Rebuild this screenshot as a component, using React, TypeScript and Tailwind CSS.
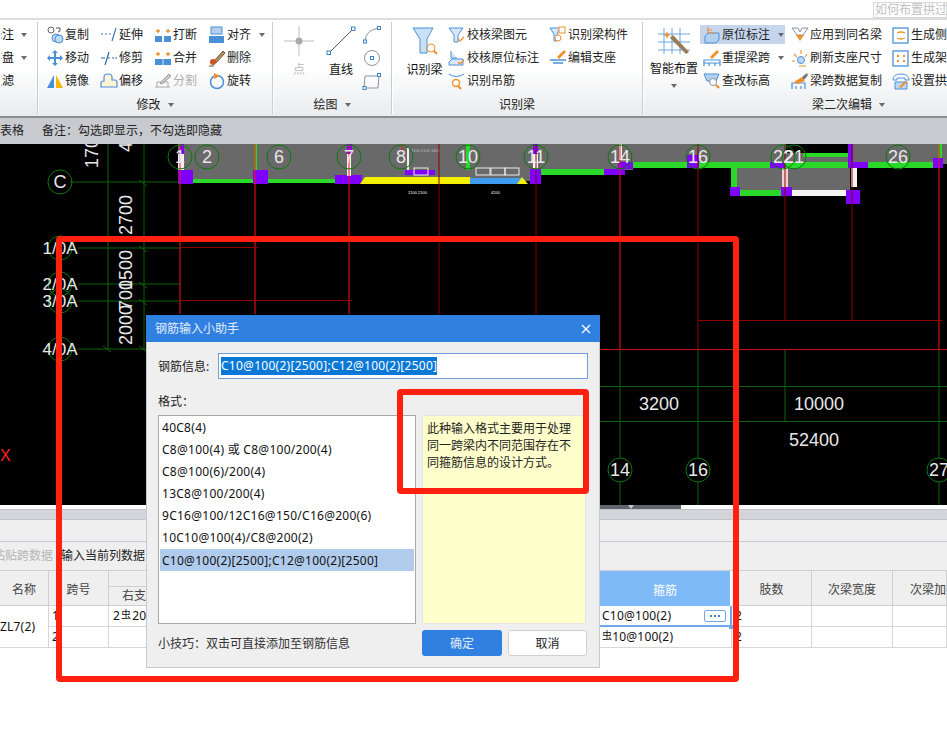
import type { ReactNode } from 'react';

const FONT = "font-['Noto_Sans','Noto_Sans_CJK_SC',sans-serif]";
const BLUE = '#4a90d9';
const ORANGE = '#f0902a';
const GREY = '#8a949e';

// 18x18 ribbon icons, drawn roughly like the originals
const ICONS: Record<string, ReactNode> = {
  copy: <><circle cx="5" cy="4" r="3" fill="#fff" stroke="#666" /><circle cx="10" cy="12" r="4" fill="#bcd8f4" stroke={BLUE} /><circle cx="13" cy="13" r="4" fill="#bcd8f4" stroke={BLUE} /><path d="M10 2h4v3M12 6l2-1" fill="none" stroke="#555" /></>,
  move: <path d="M9 1l3 3h-2v4h4V6l3 3-3 3v-2h-4v4h2l-3 3-3-3h2v-4H4v2L1 9l3-3v2h4V4H6z" fill={BLUE} />,
  mirror: <><path d="M8 3v13H1z" fill={BLUE} /><path d="M10 3v13h7z" fill="#f8b500" /></>,
  extend: <path d="M1 8h2M5 8h2M9 8h2M16 2l-4 13" fill="none" stroke="#3d78b8" strokeWidth="1.2" />,
  trim: <path d="M1 9h4M8 9h2M12 9h2M15 9h2M9 3l-4 13" fill="none" stroke="#2b6aa8" strokeWidth="1.2" />,
  offset: <path d="M1 15v-4q0-2 3-2V5q0-3 4-3t4 3v3h3q2 0 2 3v4z" fill="#fff3d8" stroke={BLUE} strokeWidth="1.2" />,
  breakIcon: <><rect x="1" y="10" width="7" height="6" fill={BLUE} /><rect x="10" y="10" width="7" height="6" fill={BLUE} /><path d="M2 5h4M4 3v4M12 5h4M14 3v4" stroke={ORANGE} strokeWidth="1.3" /></>,
  merge: <><rect x="1" y="10" width="16" height="6" fill={BLUE} /><path d="M9 10v6" stroke="#cfe2f6" /><path d="M2 5h4M4 3v4M12 5h4M14 3v4" stroke={ORANGE} strokeWidth="1.3" /></>,
  split: <><path d="M1 15h15M3 15v-5h11v5" fill="none" stroke="#aaa" /><path d="M6 11l9-9 2 2-9 8z" fill="#ccc" stroke="#999" /></>,
  align: <><rect x="3" y="1" width="11" height="7" fill="#b4d0f0" stroke={BLUE} /><rect x="1" y="10" width="15" height="7" fill={BLUE} /></>,
  erase: <><path d="M6 12L15 2l2 2-9 10z" fill="#b89060" stroke="#6b5a40" /><circle cx="5" cy="13" r="3" fill="#d2521c" /><path d="M1 17h5" stroke="#555" /></>,
  rotate: <><circle cx="9" cy="10" r="6.5" fill="none" stroke={BLUE} strokeWidth="1.5" /><path d="M6 1l6 3-6 3z" fill={ORANGE} /></>,
  check1: <><path d="M1 2h14l-5 7v7H6V9z" fill="#d8e8f8" stroke={BLUE} /><path d="M10 13l2 2 4-4" fill="none" stroke={ORANGE} strokeWidth="1.3" /></>,
  check2: <><path d="M3 2v7h6M1 13l3-3h11v6H1z" fill="#d8e8f8" stroke={BLUE} /><path d="M10 13l2 2 4-4" fill="none" stroke={ORANGE} strokeWidth="1.3" /></>,
  hanger: <><path d="M1 2q7 5 15 0" fill="none" stroke={BLUE} /><circle cx="8" cy="11" r="3.5" fill="#fff" stroke={ORANGE} strokeWidth="1.4" /><path d="M10 14l3 3" stroke={ORANGE} strokeWidth="2" /></>,
  member: <><path d="M1 2h10l-3 6v7H5V8z" fill="#d8e8f8" stroke={BLUE} /><rect x="10" y="1" width="6" height="6" fill="#fff" stroke={ORANGE} /><circle cx="9" cy="12" r="3" fill="#fff" stroke={ORANGE} /></>,
  support: <><path d="M8 8l7-7 2 2-7 7z" fill={ORANGE} /><path d="M1 11h16M4 14h10" stroke={BLUE} strokeWidth="1.3" /></>,
  inplace: <><path d="M2 10l3-3h11v7l-3 3H2z" fill="#b4d0f0" stroke={BLUE} /><path d="M5 1v6M5 4h4M5 7h7" stroke={ORANGE} strokeWidth="1.2" /></>,
  reget: <><path d="M7 8l7-7 2 2-7 7z" fill={ORANGE} /><path d="M1 17v-6h16v6M1 14h16M6 14v3M12 14v3" fill="none" stroke={BLUE} strokeWidth="1.2" /></>,
  level: <><path d="M1 2h15l-3 7H4z" fill="#b4d0f0" stroke={BLUE} /><circle cx="10" cy="10" r="3.5" fill="#fff" stroke={GREY} /><path d="M13 13l3 3" stroke={ORANGE} strokeWidth="2.4" /></>,
  apply: <><path d="M1 2h6l2 4 2-4h6l-5 7H6z" fill="#fff" stroke={GREY} /><path d="M5 9h8l-4 6z" fill={ORANGE} /></>,
  refresh: <><circle cx="10" cy="11" r="3.5" fill="#bcd8f4" stroke={BLUE} /><path d="M10 1v4M3 5l3 3M1 12h3M16 5l-2 3M8 17h7" stroke={ORANGE} strokeWidth="1.1" /></>,
  brush: <><path d="M1 17v-6h13v6M5 14v3M10 14v3" fill="none" stroke={BLUE} strokeWidth="1.2" /><path d="M3 10l8-5 3 4-8 3z" fill={ORANGE} /><path d="M11 5l5-4 1 2-4 5z" fill="#777" /></>,
  side: <><rect x="1" y="2" width="15" height="15" fill="#fff" stroke={BLUE} strokeWidth="1.3" /><path d="M5 7q4-2 8 0M5 12q4 2 8 0" fill="none" stroke={ORANGE} strokeWidth="1.3" /></>,
  frame: <><rect x="1" y="2" width="15" height="15" fill="#fff" stroke={BLUE} strokeWidth="1.3" /><path d="M5 6h2v2H5zM11 6h2v2h-2zM5 11h2v2H5zM11 11h2v2h-2z" fill={ORANGE} /></>,
  arch: <><path d="M1 8q0-6 8-6t8 6h-4V6H5v2z" fill="#fff" stroke={BLUE} /><path d="M3 10h12v7H3z" fill="#bcd8f4" stroke={BLUE} /><path d="M7 15l6-6 2 1-6 6z" fill={ORANGE} /></>,
};

function Icon({ name, size = 18 }: { name: string; size?: number }) {
  return (
    <svg width={size} height={size} viewBox="0 0 18 18" className="shrink-0">
      {ICONS[name]}
    </svg>
  );
}

function Caret({ className = '' }: { className?: string }) {
  return <span className={`inline-block w-0 h-0 border-x-[3.5px] border-x-transparent border-t-[4px] border-t-[#6b6b6b] ${className}`} />;
}

function RibbonItem({ icon, label, caret, disabled }: { icon: string; label: string; caret?: boolean; disabled?: boolean }) {
  return (
    <div className="flex items-center h-[23px] whitespace-nowrap gap-[1px]">
      <Icon name={icon} />
      <span className={disabled ? 'text-[#b0b0b0]' : 'text-[#222]'}>{label}</span>
      {caret && <Caret className="ml-[7px]" />}
    </div>
  );
}

function RibbonGroup({ width, label, caret, children }: { width: number; label?: string; caret?: boolean; children: ReactNode }) {
  return (
    <div className="flex flex-col shrink-0 border-r border-r-[#c9cbce] shadow-[1px_0_0_#fff] my-[2px]" style={{ width }}>
      <div className="flex h-[69px] mt-[1px] ">{children}</div>
      <div className="h-[23px] pt-[4px] flex items-center justify-center gap-[7px] text-[#222]">
        {label}
        {caret && <Caret />}
      </div>
    </div>
  );
}

function Ribbon() {
  return (
    <div className="flex h-[98px] pl-px bg-gradient-to-b from-white from-50% to-[#e9ebed] border-b-2 border-b-[#8b8d90]">
      <RibbonGroup width={37}>
        <div className="flex flex-col w-full overflow-hidden">
          {['标注', '存盘', '过滤'].map((t, i) => (
            <div key={t} className="flex items-center h-[23px] -ml-[11px] whitespace-nowrap">
              {t}
              {i < 2 && <Caret className="ml-[7px]" />}
            </div>
          ))}
        </div>
      </RibbonGroup>

      <RibbonGroup width={235} label="修改" caret>
        <div className="flex pl-[8px]">
          <div className="w-[54px]">
            <RibbonItem icon="copy" label="复制" />
            <RibbonItem icon="move" label="移动" />
            <RibbonItem icon="mirror" label="镜像" />
          </div>
          <div className="w-[54px]">
            <RibbonItem icon="extend" label="延伸" />
            <RibbonItem icon="trim" label="修剪" />
            <RibbonItem icon="offset" label="偏移" />
          </div>
          <div className="w-[54px]">
            <RibbonItem icon="breakIcon" label="打断" />
            <RibbonItem icon="merge" label="合并" />
            <RibbonItem icon="split" label="分割" disabled />
          </div>
          <div>
            <RibbonItem icon="align" label="对齐" caret />
            <RibbonItem icon="erase" label="删除" />
            <RibbonItem icon="rotate" label="旋转" />
          </div>
        </div>
      </RibbonGroup>

      <RibbonGroup width={119} label="绘图" caret>
        <div className="flex pl-[11px]">
          <div className="w-[30px] flex flex-col items-center">
            <svg width="30" height="30" viewBox="0 0 30 30" className="mt-[3px]">
              <path d="M0 15h30M15 0v30" stroke="#bdbdbd" />
              <circle cx="15" cy="15" r="3.5" fill="#aaa" />
            </svg>
            <span className="mt-[5px] text-[#bdbdbd]">点</span>
          </div>
          <div className="w-[30px] ml-[12px] flex flex-col items-center">
            <svg width="30" height="30" viewBox="0 0 30 30" className="mt-[3px]">
              <path d="M3 27L27 3" stroke="#555" />
              <rect x="1" y="25" width="3.5" height="3.5" fill="#fff" stroke="#3b82c4" />
              <rect x="25.500" y="1" width="3.500" height="3.500" fill="#fff" stroke="#3b82c4" />
            </svg>
            <span className="mt-[5px]">直线</span>
          </div>
          <div className="ml-[6px] flex flex-col gap-[3px] pt-[2px]">
            <svg width="20" height="20" viewBox="0 0 20 20"><path d="M3 17Q3 5 17 3" fill="none" stroke={GREY} /><rect x="1.500" y="15" width="3" height="3" fill="#fff" stroke="#3b82c4" /><rect x="15.500" y="1.500" width="3" height="3" fill="#fff" stroke="#3b82c4" /></svg>
            <svg width="20" height="20" viewBox="0 0 20 20"><circle cx="10" cy="10" r="7.500" fill="none" stroke={GREY} /><rect x="8.500" y="8.500" width="3" height="3" fill="#fff" stroke="#3b82c4" /></svg>
            <svg width="20" height="20" viewBox="0 0 20 20"><path d="M3 5h14l-1 12H2z" fill="none" stroke={GREY} /><rect x="15.500" y="2.500" width="3" height="3" fill="#fff" stroke="#3b82c4" /><rect x="1" y="15.500" width="3" height="3" fill="#fff" stroke="#3b82c4" /></svg>
          </div>
        </div>
      </RibbonGroup>

      <RibbonGroup width={251} label="识别梁">
        <div className="flex pl-[11px]">
          <div className="w-[45px] -ml-[1px] mr-[1px] flex flex-col items-center">
            <svg width="30" height="30" viewBox="0 0 30 30" className="mt-[3px]">
              <path d="M3 2h20l-6 11v14h-7V13z" fill="#c9e0f6" stroke={BLUE} />
              <circle cx="21" cy="22" r="4" fill="#fff" stroke={ORANGE} />
              <path d="M24 25l3 3" stroke={ORANGE} strokeWidth="2" />
            </svg>
            <span className="mt-[5px]">识别梁</span>
          </div>
          <div className="w-[101px]">
            <RibbonItem icon="check1" label="校核梁图元" />
            <RibbonItem icon="check2" label="校核原位标注" />
            <RibbonItem icon="hanger" label="识别吊筋" />
          </div>
          <div>
            <RibbonItem icon="member" label="识别梁构件" />
            <RibbonItem icon="support" label="编辑支座" />
          </div>
        </div>
      </RibbonGroup>

      <RibbonGroup width={412} label="梁二次编辑" caret>
        <div className="flex pl-[6px]">
          <div className="w-[50px] flex flex-col items-center">
            <svg width="32" height="32" viewBox="0 0 32 32" className="mt-[3px]">
              <path d="M6 2v26M14 2v26M22 2v26M0 8h32M0 16h32M0 24h32" stroke="#6fa6dc" />
              <path d="M12 12l16 16 3-2L15 9z" fill="#9a7b55" />
              <path d="M9 5l1 3 3 1-3 1-1 3-1-3-3-1 3-1z" fill={ORANGE} />
            </svg>
            <span className="mt-[2px] whitespace-nowrap">智能布置</span>
            <Caret className="mt-[6px]" />
          </div>
          <div className="w-[88px] -mr-[1px] ml-[1px]">
            <div className="bg-[#c5d5ec] h-[19px] mt-[2px] mb-[2px] flex items-center pl-[3px] w-[85px]">
              <RibbonItem icon="inplace" label="原位标注" caret />
            </div>
            <div className="pl-[3px]">
              <RibbonItem icon="reget" label="重提梁跨" caret />
              <RibbonItem icon="level" label="查改标高" />
            </div>
          </div>
          <div className="w-[105px] pl-[4px]">
            <RibbonItem icon="apply" label="应用到同名梁" />
            <RibbonItem icon="refresh" label="刷新支座尺寸" />
            <RibbonItem icon="brush" label="梁跨数据复制" />
          </div>
          <div>
            <RibbonItem icon="side" label="生成侧面筋" />
            <RibbonItem icon="frame" label="生成架立筋" />
            <RibbonItem icon="arch" label="设置拱梁" />
          </div>
        </div>
      </RibbonGroup>
    </div>
  );
}

const TOP_AXES: [string, number][] = [['1', 180], ['2', 207], ['6', 279], ['7', 349], ['8', 401], ['10', 468], ['11', 536], ['14', 620], ['16', 698], ['22', 783], ['21', 794], ['26', 898]];
const PURPLE: [number, number, number, number][] = [[178, 170, 15, 14], [253, 170, 15, 14], [335, 175, 27, 9], [347, 144, 5, 10], [180, 144, 4, 10], [530, 169, 11, 15], [604, 169, 21, 6], [618, 162, 15, 7], [687, 155, 12, 13], [770, 162, 15, 6], [852, 162, 16, 6], [848, 144, 5, 24], [933, 158, 10, 10], [730, 187, 10, 9], [781, 187, 11, 9], [846, 190, 14, 14], [405, 170, 30, 5], [533, 144, 5, 10]];
const GREENS: [number, number, number, number][] = [[193, 179, 60, 4], [268, 179, 67, 4], [541, 169, 63, 6], [633, 162, 137, 6], [785, 162, 67, 6], [868, 162, 65, 6], [803, 153, 47, 4], [731, 168, 6, 19], [740, 190, 41, 6], [254, 144, 3, 26], [938, 144, 4, 14], [466, 144, 4, 26]];
const COLUMNS: [number, number, number, number, string][] = [[782, 168, 6, 19, '#f4d0d0'], [851, 168, 6, 19, '#f4f4f4'], [178, 154, 6, 16, '#f4f4f4'], [347, 154, 4, 22, '#f4f4f4'], [407, 148, 2, 22, '#eeeeee'], [533, 154, 5, 15, '#f4f4f4'], [619, 144, 3, 16, '#f4f4f4']];

function Canvas() {
  const vertical = (x: number, y: number, t: string) => (
    <text x={x} y={y} transform={`rotate(-90 ${x} ${y})`} fontSize="18" fill="#e8e8e8">{t}</text>
  );
  const bubble = (x: number, y: number, t: string, key: string) => (
    <g key={key}>
      <circle cx={x} cy={y} r="12" fill="none" stroke="#0a7a0a" />
      <text x={x} y={y + 6} textAnchor="middle" fontSize="18" fill="#e8e8e8">{t}</text>
    </g>
  );
  return (
    <svg width="947" height="361" viewBox="0 144 947 361" className="block bg-black font-['Liberation_Sans',sans-serif]">
      <rect x="178" y="144" width="357" height="37" fill="#696969" />
      <rect x="535" y="144" width="98" height="26" fill="#696969" />
      <rect x="633" y="144" width="153" height="19" fill="#696969" />
      <rect x="786" y="153" width="161" height="10" fill="#696969" />
      <rect x="852" y="144" width="95" height="20" fill="#696969" />
      <rect x="733" y="168" width="117" height="24" fill="#696969" />
      {GREENS.map(([x, y, w, h], i) => <rect key={i} x={x} y={y} width={w} height={h} fill="#29d829" />)}
      {PURPLE.map(([x, y, w, h], i) => <rect key={i} x={x} y={y} width={w} height={h} fill="#8000ff" />)}
      <rect x="792" y="190" width="54" height="6" fill="#f4f4f4" />
      <path d="M360 184l5-7h105l5 7z" fill="#f4f000" />
      <path d="M470 178h52l5 6h-57z" fill="#3f9cf0" />
      <path d="M517 184l5-7 6 7z" fill="#f4f000" />
      {COLUMNS.map(([x, y, w, h, c], i) => <rect key={i} x={x} y={y} width={w} height={h} fill={c} />)}
      <rect x="414" y="168" width="14" height="7" fill="none" stroke="#eee" />
      {[476, 491, 505].map((x) => <rect key={x} x={x} y="168" width="14" height="7" fill="none" stroke="#eee" />)}
      <text x="408" y="194" fontSize="4" fill="#fff">2100 2100</text>
      <text x="491" y="194" fontSize="4" fill="#fff">4200</text>
      <text x="411" y="152" fontSize="4" fill="#bbb">2100 2100 1800</text>

      <path d="M108 144v206M144 144v206M70 182h110M78 248h102M78 284h102M78 301h102M78 349h68" stroke="#0b640b" fill="none" />
      <path d="M139 180l8 6M139 246l8 6M139 282l8 6M139 299l8 6M103 346l8 6M139 346l8 6" stroke="#0b640b" />
      <path d="M180 144v170M255 144v170M349 144v170M402 144v8" stroke="#ff1010" />
      <path d="M439 144v170M536 144v170M698 144v206M785 144v177M852 144v177" stroke="#8f0000" />
      <path d="M620 144v206M939 144v206" stroke="#ff1010" />
      <path d="M180 247.500h78M180 300.500h172M698 320.500h244" stroke="#8f0000" />
      <path d="M600 349.500h347" stroke="#d01010" />
      <path d="M600 386.500h347M600 421.500h347" stroke="#0b640b" />
      <path d="M620 350v108M698 350v108M785 350v72M939 350v108M620 482v23M698 482v23M939 482v23" stroke="#0b640b" />

      {TOP_AXES.map(([t, x]) => bubble(x, 157, t, t))}
      {bubble(60, 182, 'C', 'C')}
      {[[248, '1/0A'], [284, '2/0A'], [301, '3/0A'], [349, '4/0A']].map(([y, t]) => (
        <g key={t as string}>
          <circle cx="60" cy={y as number} r="12" fill="none" stroke="#0a7a0a" />
          <text x="60" y={(y as number) + 6} textAnchor="middle" fontSize="17" fill="#e8e8e8">{t}</text>
        </g>
      ))}
      {vertical(98, 168, '170')}
      {vertical(132, 152, '4')}
      {vertical(132, 235, '2700')}
      {vertical(132, 290, '1500')}
      {vertical(132, 310, '700')}
      {vertical(132, 345, '2000')}
      <text x="659" y="410" textAnchor="middle" fontSize="18" fill="#e8e8e8">3200</text>
      <text x="819" y="410" textAnchor="middle" fontSize="18" fill="#e8e8e8">10000</text>
      <text x="814" y="446" textAnchor="middle" fontSize="18" fill="#e8e8e8">52400</text>
      <text x="0" y="461" fontSize="16" fill="#ff2020">X</text>
      {bubble(620, 470, '14', 'b14')}
      {bubble(698, 470, '16', 'b16')}
      {bubble(939, 470, '27', 'b27')}
    </svg>
  );
}

function Table() {
  const head = 'bg-[#efefef] border-r border-b border-[#cfcfcf] flex items-center justify-center text-[#444] pt-[4px]';
  const cell = 'border-r border-b border-[#d6d6d6] flex items-center px-[3px] whitespace-nowrap tracking-[0.2px]';
  return (
    <div className="grid grid-cols-[49px_60px_491px_132px_80px_81px_1fr] grid-rows-[35px_21px_21px]">
      <div className={head}>名称</div>
      <div className={head}>跨号</div>
      <div className="bg-[#efefef] border-r border-b border-[#cfcfcf] flex flex-col">
        <div className="h-[17px] border-b border-[#cfcfcf]" />
        <div className="flex-1 pl-[13px] flex items-center text-[#444]">右支座钢筋</div>
      </div>
      <div className="bg-[#7eb9f8] text-white flex items-center justify-center border-r-2 border-white pt-[4px]">箍筋</div>
      <div className={head}>肢数</div>
      <div className={head}>次梁宽度</div>
      <div className={`${head} !justify-start pl-[17px] whitespace-nowrap overflow-hidden`}>次梁加筋</div>

      <div className={`${cell} row-span-2 -ml-[3px] border-b-[#d6d6d6]`}>ZL7(2)</div>
      <div className={cell}>1</div>
      <div className={`${cell} pl-[4px]`}>2<span className="text-[10px] mx-[1px] -mt-[3px]">虫</span>20</div>
      <div className="relative border-r-2 border-b-2 border-[#6fa8e8] flex items-center px-[2px] tracking-[0.25px]">
        C10@100(2)
        <span className="ml-auto mr-[2px] w-[22px] h-[12px] border border-[#6fa8e8] rounded-[2px] flex items-center justify-center gap-[2px]">
          <span className="w-[2px] h-[2px] bg-[#4a80c0]" />
          <span className="w-[2px] h-[2px] bg-[#4a80c0]" />
          <span className="w-[2px] h-[2px] bg-[#4a80c0]" />
        </span>
        <span className="absolute -right-[3px] -bottom-[4px] w-[4px] h-[4px] bg-[#6fa8e8]" />
      </div>
      <div className={cell}>2</div>
      <div className={cell} />
      <div className={cell} />

      <div className={cell}>2</div>
      <div className={cell} />
      <div className={`${cell} !px-[2px]`}><span className="text-[10px] -mt-[3px]">虫</span>10@100(2)</div>
      <div className={cell}>2</div>
      <div className={cell} />
      <div className={cell} />
    </div>
  );
}

const FORMATS = ['40C8(4)', 'C8@100(4) 或 C8@100/200(4)', 'C8@100(6)/200(4)', '13C8@100/200(4)', '9C16@100/12C16@150/C16@200(6)', '10C10@100(4)/C8@200(2)', 'C10@100(2)[2500];C12@100(2)[2500]'];

function Dialog() {
  return (
    <div className="absolute left-[146px] top-[315px] w-[454px] h-[353px] bg-[#efefef] border border-t-0 border-[#c3cad6] flex flex-col">
      <div className="h-[27px] -mx-px bg-[#2f80e0] text-[#e4eefa] flex items-center justify-between pl-[9px] pr-[9px]">
        钢筋输入小助手
        <svg width="10" height="10" viewBox="0 0 10 10"><path d="M1 1l8 8M9 1l-8 8" stroke="#fff" strokeWidth="1.300" /></svg>
      </div>
      <div className="flex-1 flex flex-col px-[11px]">
        <div className="flex items-center mt-[11px] h-[26px]">
          <span className="w-[60px] pt-[2px] text-[#222]">钢筋信息:</span>
          <div className="flex-1 h-[26px] bg-white border border-[#6f9ed8] flex items-center pl-[2px]">
            <span className="bg-[#0a78d7] text-white leading-[18px] whitespace-nowrap tracking-[0.27px]">{FORMATS[6]}</span>
          </div>
        </div>
        <div className="mt-[13px] h-[18px] pt-[2px] flex items-center text-[#222]">格式：</div>
        <div className="flex gap-[6px] mt-[5px] h-[209px]">
          <div className="w-[258px] bg-white border border-[#a9a9a9] p-[1px] pt-[0px]">
            {FORMATS.map((f, i) => (
              <div key={f} className={`h-[22px] flex items-center pl-[2px] pt-[1px] whitespace-nowrap tracking-[0.27px] ${i === 6 ? 'bg-[#b0cbec] h-[20px] mt-[1px]' : ''}`}>{f}</div>
            ))}
          </div>
          <div className="w-[164px] bg-[#ffffcc] border border-[#e4e4e4] px-[4px] pt-[4px] leading-[17px] text-[#222]">
            此种输入格式主要用于处理同一跨梁内不同范围存在不同箍筋信息的设计方式。
          </div>
        </div>
        <div className="flex items-center mt-[6px] h-[26px]">
          <span className="w-[264px] pt-[2px] text-[#333]">小技巧：双击可直接添加至钢筋信息</span>
          <button className="w-[80px] h-[26px] pt-px rounded-[3px] bg-[#2f80e0] text-[#e4eefa]">确定</button>
          <button className="w-[79px] h-[26px] pt-px ml-[6px] rounded-[3px] bg-white border border-[#d0d0d0] text-[#222]">取消</button>
        </div>
      </div>
    </div>
  );
}

export default function App() {
  return (
    <div className={`relative w-[947px] h-[743px] overflow-hidden bg-white text-[12px] text-[#111] ${FONT}`}>
      <div className="h-[20px] border-b-2 border-b-[#dcdcdc] flex justify-end items-start pt-[2px]">
        <div className="w-[74px] h-[16px] border border-[#d8d8d8] text-[#c0c0c0] overflow-hidden whitespace-nowrap leading-[14px] pl-px">如何布置拱过梁</div>
      </div>
      <Ribbon />
      <div className="h-[26px] bg-[#c8cacf] flex items-center whitespace-nowrap text-[#222]">
        <span className="w-[54px] -ml-[24px]">显示表格</span>
        <span className="ml-[12px]">备注：勾选即显示，不勾选即隐藏</span>
      </div>
      <Canvas />
      <div className="h-[4px] flex">
        <div className="w-[600px]" />
        <div className="w-[81px] bg-[#5f666c] flex justify-center pr-[20px]">
          <Caret className="!border-t-[#c8c8c8]" />
        </div>
      </div>
      <div className="h-[11px] bg-[#d4d5da] border-y border-[#c4c5ca]" />
      <div className="h-[22px] bg-[#efefef] border-b border-[#c8cad0]" />
      <div className="h-[29px] bg-[#efefef] flex items-center whitespace-nowrap border-b border-[#cfcfcf]">
        <span className="text-[#b5b5b5] -ml-[7px]">粘贴跨数据</span>
        <span className="ml-[8px] text-[#222]">输入当前列数据</span>
      </div>
      <Table />

      <Dialog />

      {/* hand drawn red markers on top of the screenshot */}
      <div className="absolute left-[56px] top-[236px] w-[683px] h-[446px] border-[6px] border-[#ff2010] rounded-[4px]" />
      <div className="absolute left-[397px] top-[389px] w-[192px] h-[105px] border-[6px] border-[#ff2010] rounded-[4px]" />
    </div>
  );
}
